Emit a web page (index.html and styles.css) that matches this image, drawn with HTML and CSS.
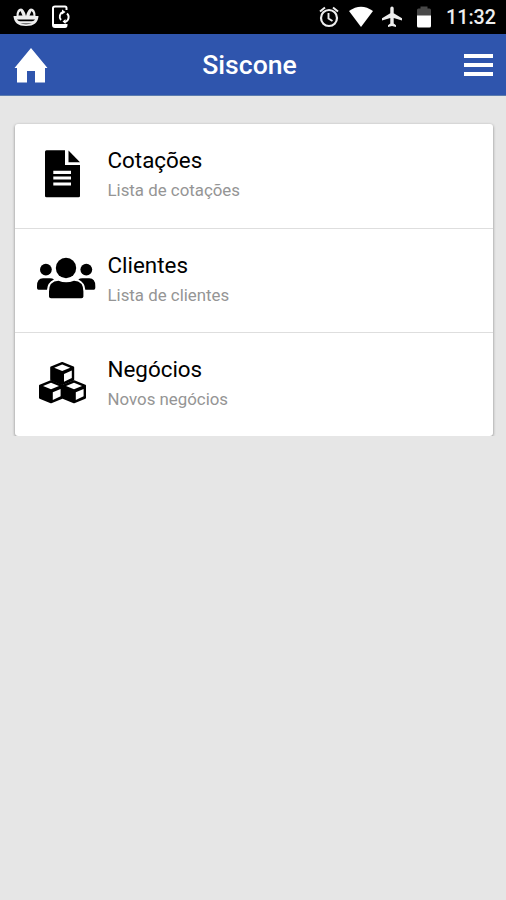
FILE: index.html
```html
<!DOCTYPE html>
<html lang="pt-BR">
<head>
    <meta charset="UTF-8">
    <meta name="viewport" content="width=device-width, initial-scale=1.0">
    <title>Siscone</title>
    <link rel="stylesheet" href="styles.css">
</head>
<body>
    <div class="status-bar">
        <div class="status-left">
            <svg width="26" height="20" viewBox="0 0 26 20">
                <path d="M3.500 9 Q3.500 1.500 8 1.500 Q11 1.500 13 9 Q15 1.500 18 1.500 Q22.500 1.500 22.500 9 L25.500 9 Q25 19 13 19 Q1 19 .5 9Z" fill="#eee"/>
                <path d="M5.500 8.500 Q5.500 5 7.500 4 L9.500 8.500Z M20.500 8.500 Q20.500 5 18.500 4 L16.500 8.500Z" fill="#000"/>
                <path d="M4 12.500 H22 Q21 14.200 19 14.200 H7 Q5 14.200 4 12.500Z M7 16.500 H19 Q13 18 7 16.500Z" fill="#000"/>
            </svg>
            <svg width="20" height="24" viewBox="0 0 20 24" fill="none" stroke="#fff">
                <path d="M15.500 5 V3 Q15.500 1.500 14 1.500 H4 Q2 1.500 2 3 V20 Q2 22 4 22 H14 Q15.500 22 15.500 20 V19" stroke-width="2"/>
                <path d="M3 20.500 H15" stroke-width="3"/>
                <path d="M12 7 A5 5 0 0 0 10 15 M14 17 A5 5 0 0 0 16 8.500" stroke-width="1.900"/>
                <path d="M11 4.500 L14.500 7 L11 9.500Z M14.500 14 V19 L11.500 16.500Z" fill="#fff" stroke="none"/>
            </svg>
        </div>
        <div class="status-right">
            <svg width="20" height="22" viewBox="0 0 20 22" fill="none" stroke="#eee">
                <circle cx="10" cy="12" r="8" stroke-width="2.200"/>
                <path d="M1 5.500 L6 1.500 M19 5.500 L14 1.500" stroke-width="2"/>
                <path d="M9.500 7 V12.500 L13.500 15" stroke-width="1.900"/>
            </svg>
            <svg class="wifi" width="26" height="22" viewBox="0 0 26 22">
                <path d="M1 5 Q13 -3.500 25 5 L13 21Z" fill="#fff"/>
            </svg>
            <svg class="plane" width="20" height="22" viewBox="0 0 20 22">
                <path d="M20 14.500 V12.200 L11.700 7.300 V2.200 Q11.700 .5 10 .5 T8.300 2.200 V7.300 L0 12.200 V14.500 L8.300 12 V17.500 L6 19.200 V21 L10 20 L14 21 V19.200 L11.700 17.500 V12Z" fill="#eee"/>
            </svg>
            <svg class="battery" width="14" height="22" viewBox="0 0 14 22">
                <path d="M0 10 V4 Q0 2.500 1.500 2.500 H3.500 V.5 H10.500 V2.500 H12.500 Q14 2.500 14 4 V10Z" fill="#484848"/>
                <path d="M0 9.500 H14 V20 Q14 21.500 12.500 21.500 H1.500 Q0 21.500 0 20Z" fill="#fff"/>
            </svg>
            <span class="clock">11:32</span>
        </div>
    </div>

    <header>
        <svg class="home" width="34" height="36" viewBox="0 0 34 36">
            <path d="M17 1 L33.500 21 H31 V35.500 H21 V24 H13 V35.500 H3 V21 H.5Z" fill="#fff"/>
        </svg>
        <h1>Siscone</h1>
        <div class="menu-button">
            <span></span>
            <span></span>
            <span></span>
        </div>
    </header>

    <main>
        <ul class="menu-list">
            <li>
                <svg class="item-icon" width="60" height="60" viewBox="36 145 60 60">
                    <path d="M46.500 150.300 H65 V165 H80 V196 Q80 197.300 78.500 197.300 H46.500 Q45 197.300 45 196 V151.800 Q45 150.300 46.500 150.300Z"/>
                    <path d="M68.500 150.500 L80 162.200 H68.500Z"/>
                    <path d="M53.300 172.300 H71 M53.300 178 H71 M53.300 184 H71" stroke="#fff" stroke-width="3.200"/>
                </svg>
                <div class="item-text">
                    <h2>Cotações</h2>
                    <p>Lista de cotações</p>
                </div>
            </li>
            <li>
                <svg class="item-icon" width="60" height="60" viewBox="36 250 60 60">
                    <circle cx="66" cy="268" r="10.200"/>
                    <circle cx="45.900" cy="269.600" r="5.900"/>
                    <circle cx="86.300" cy="269.600" r="5.900"/>
                    <path d="M38.500 289.700 Q37 289.700 37 288 V286 Q37 278.200 43 278.200 H50 Q52.500 278.200 54 279.500 Q47.500 282.500 47 289.700Z"/>
                    <path d="M93.800 289.700 Q95.300 289.700 95.300 288 V286 Q95.300 278.200 89.300 278.200 H82.300 Q79.800 278.200 78.300 279.500 Q84.800 282.500 85.300 289.700Z"/>
                    <path d="M49 296.500 V291.500 Q49 281 58.500 280.700 Q66 284 74 280.700 Q83.400 281 83.400 291.500 V296.500 Q83.400 298.300 81.500 298.300 H51 Q49 298.300 49 296.500Z"/>
                </svg>
                <div class="item-text">
                    <h2>Clientes</h2>
                    <p>Lista de clientes</p>
                </div>
            </li>
            <li>
                <svg class="item-icon" width="60" height="60" viewBox="36 354 60 60">
                    <defs>
                        <g id="cube">
                            <path d="M12 1 L23 5.500 V17.500 L12 22 L1 17.500 V5.500Z" stroke="#000" stroke-width="2" stroke-linejoin="round"/>
                            <path d="M12 2.500 L20 5.700 L12 9 L4 5.700Z M13.800 12 L21.600 8.600 V16 L13.800 19.700Z" fill="#fff"/>
                        </g>
                    </defs>
                    <use href="#cube" x="50.200" y="362"/>
                    <use href="#cube" x="39" y="380.300"/>
                    <use href="#cube" x="62" y="380.300"/>
                </svg>
                <div class="item-text">
                    <h2>Negócios</h2>
                    <p>Novos negócios</p>
                </div>
            </li>
        </ul>
    </main>
</body>
</html>
```
FILE: styles.css
```css
body {
    font-family: Roboto, sans-serif;
    margin: 0;
    padding: 0;
    background-color: #e6e6e6;
    color: #000;
}

svg {
    display: block;
    flex-shrink: 0;
}

.status-bar {
    display: flex;
    justify-content: space-between;
    align-items: center;
    height: 34px;
    box-sizing: border-box;
    padding: 0 10px 0 13px;
    background-color: #000;
    color: #eee;
}

.status-left,
.status-right {
    display: flex;
    align-items: center;
}

.status-left {
    gap: 12px;
}

.wifi {
    margin-left: 9px;
}

.plane {
    margin-left: 8px;
}

.battery {
    margin-left: 15px;
}

.clock {
    width: 50px;
    margin-left: 15px;
    padding-top: 2px;
    font-size: 19.700px;
    font-weight: 500;
    line-height: 34px;
    white-space: nowrap;
}

header {
    display: flex;
    align-items: center;
    height: 62px;
    box-sizing: border-box;
    padding: 0 13px 0 14px;
    background-color: #2f55ad;
    border-bottom: 1px solid #5b7cae;
    color: #fff;
}

header h1 {
    flex: 1;
    margin: 0;
    padding-right: 13px;
    font-size: 26.600px;
    font-weight: 500;
    line-height: 61px;
    text-align: center;
}

.menu-button {
    display: flex;
    flex-direction: column;
    gap: 5px;
    width: 29px;
}

.menu-button span {
    height: 4px;
    background-color: #fff;
}

main {
    padding: 28px 13px 0 15px;
}

.menu-list {
    margin: 0;
    padding: 0;
    list-style: none;
    background-color: #fff;
    border-radius: 3px;
    box-shadow: 0 1px 3px rgba(0, 0, 0, 0.45);
}

.menu-list li {
    display: flex;
    height: 104px;
    box-sizing: border-box;
    padding: 21px 0 0 21px;
    border-bottom: 1px solid #dedede;
}

.menu-list li:first-child {
    height: 105px;
}

.menu-list li:last-child {
    height: 103px;
    border-bottom: none;
}

.item-text {
    margin-left: 11.500px;
}

.item-text h2 {
    margin: 0;
    font-size: 22.400px;
    font-weight: 400;
    line-height: 31px;
}

.item-text p {
    margin: 0;
    font-size: 16.850px;
    line-height: 28px;
    color: #959595;
}
```
